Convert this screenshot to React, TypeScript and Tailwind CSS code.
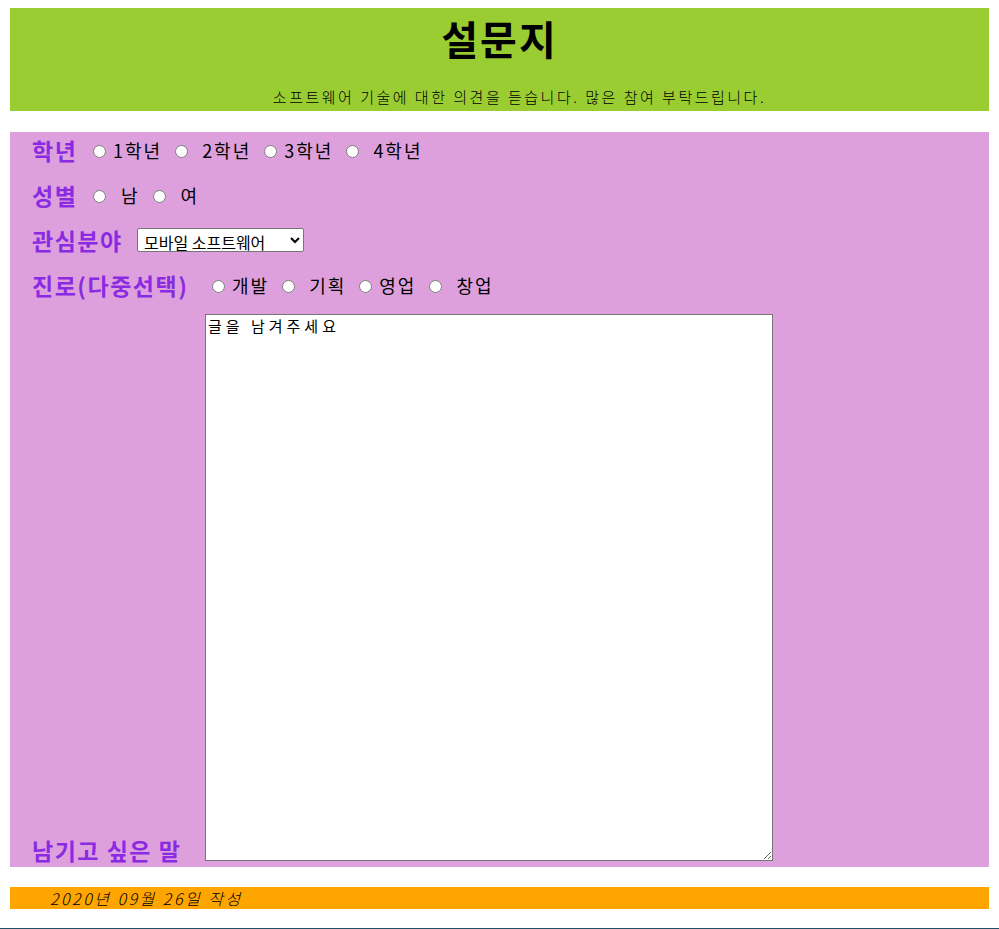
export default function App() {
  const label = 'shrink-0 font-bold text-[23px] tracking-[1.5px] text-[#8a2be2]';
  const radio = 'w-[13px] h-[13px] mt-[3px] shrink-0';
  return (
    <div
      className="bg-white min-h-[929px] pt-[8px]"
      style={{ fontFamily: '"Noto Sans CJK KR", "Noto Sans", sans-serif' }}
    >
      <header className="mx-[10px] h-[103px] bg-[#9acd32] flex flex-col items-center">
        <h1 className="text-[40px] font-bold tracking-[2px] leading-none mt-[10px] text-black">설문지</h1>
        <p className="mt-[28px] ml-[40px] text-[15px] tracking-[2.5px] text-black font-light">
          소프트웨어 기술에 대한 의견을 듣습니다. 많은 참여 부탁드립니다.
        </p>
      </header>

      <section className="mx-[10px] mt-[21px] bg-[#dda0dd] pl-[22px] pb-[6px] flex flex-col gap-[9px] text-[18px] tracking-[2px] text-black">
        <div className="h-[36px] flex items-center">
          <span className={label + ' w-[61px]'}>학년</span>
          <input type="radio" name="grade" className={radio} />
          <span className="ml-[7px]">1학년</span>
          <input type="radio" name="grade" className={radio + ' ml-[13px]'} />
          <span className="ml-[14px]">2학년</span>
          <input type="radio" name="grade" className={radio + ' ml-[13px]'} />
          <span className="ml-[7px]">3학년</span>
          <input type="radio" name="grade" className={radio + ' ml-[13px]'} />
          <span className="ml-[14px]">4학년</span>
        </div>
        <div className="h-[36px] flex items-center">
          <span className={label + ' w-[61px]'}>성별</span>
          <input type="radio" name="gender" className={radio} />
          <span className="ml-[15px]">남</span>
          <input type="radio" name="gender" className={radio + ' ml-[13px]'} />
          <span className="ml-[15px]">여</span>
        </div>
        <div className="h-[36px] flex items-center">
          <span className={label + ' w-[105px]'}>관심분야</span>
          <select className="h-[24px] w-[167px] border border-[#767676] bg-white text-[16px] tracking-normal px-[2px] rounded-[2px]">
            <option>모바일 소프트웨어</option>
            <option>웹 프로그래밍</option>
            <option>인공지능</option>
          </select>
        </div>
        <div className="h-[36px] flex items-center">
          <span className={label + ' w-[180px]'}>진로(다중선택)</span>
          <input type="radio" name="career" className={radio} />
          <span className="ml-[7px]">개발</span>
          <input type="radio" name="career" className={radio + ' ml-[13px]'} />
          <span className="ml-[14px]">기획</span>
          <input type="radio" name="career" className={radio + ' ml-[13px]'} />
          <span className="ml-[7px]">영업</span>
          <input type="radio" name="career" className={radio + ' ml-[13px]'} />
          <span className="ml-[14px]">창업</span>
        </div>
        <div className="flex items-end mt-[2px]">
          <span className={label + ' w-[173px] leading-none mb-[-1px]'}>남기고 싶은 말</span>
          <textarea
            defaultValue="글을 남겨주세요"
            className="w-[568px] h-[547px] border border-[#767676] bg-white text-[15px] tracking-[4px] leading-[20px] px-[2px] py-[1px] text-black"
          />
        </div>
      </section>

      <footer className="mx-[10px] mt-[20px] h-[22px] bg-[#ffa500] flex items-center pl-[40px]">
        <span className="italic text-[16px] tracking-[2.5px] text-black font-light">2020년 09월 26일 작성</span>
      </footer>

      <div className="mt-[19px] h-[2px] bg-[#1f5068]" />
    </div>
  );
}
